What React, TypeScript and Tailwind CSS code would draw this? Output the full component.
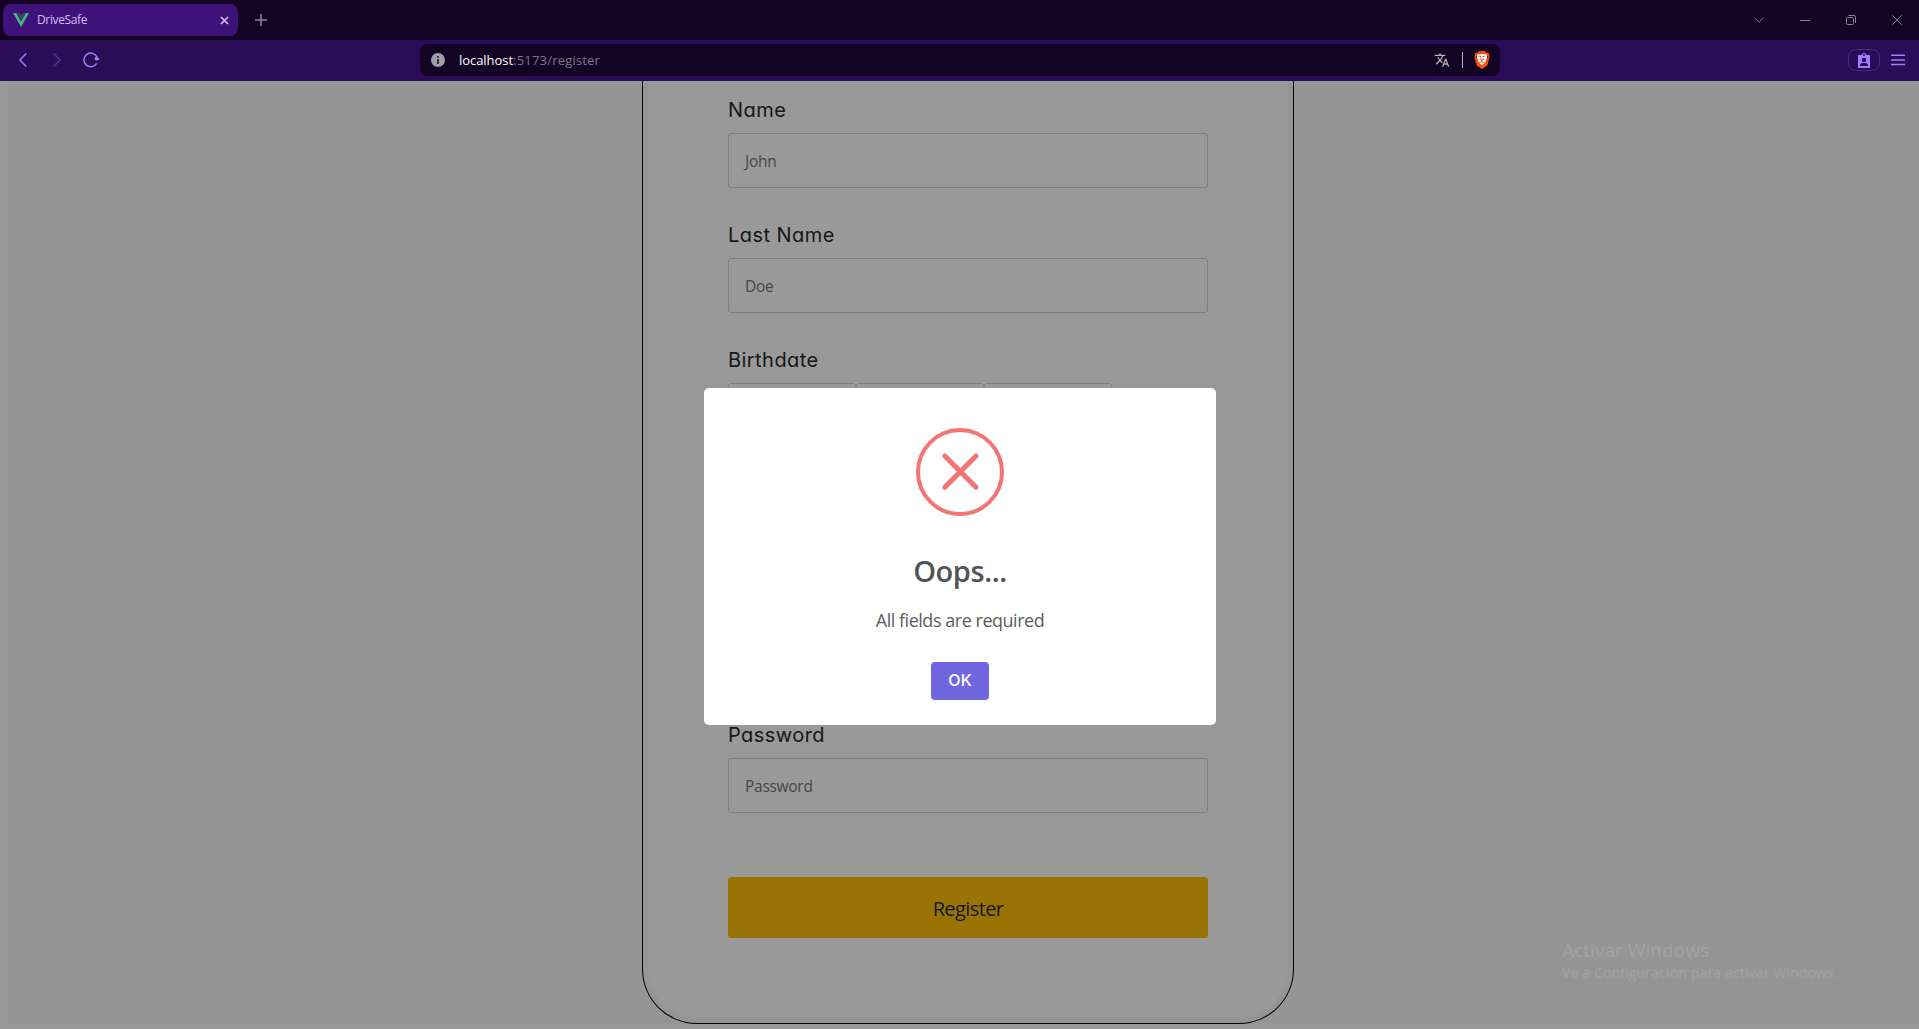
import type { ReactNode } from "react";
import { SiBrave } from "react-icons/si";
import { MdTranslate, MdAssignmentInd } from "react-icons/md";

function TabStrip() {
  return (
    <div className="flex h-10 items-center bg-[#130324] pl-[3px]">
      <div className="flex h-8 w-[235px] items-center rounded-lg bg-[#3e1279] pr-[9px] pl-[10px] text-[12px] text-[#d2bdf2]">
        <svg width="16" height="14" viewBox="0 0 16 14" className="mr-2 shrink-0">
          <path d="M0 0h3.2L8 8.4 12.8 0H16L8 14z" fill="#42b883" />
          <path d="M3.2 0h3L8 3.1 9.8 0h3L8 8.4z" fill="#35495e" />
        </svg>
        <span className="flex-1 tracking-[-0.36px]">DriveSafe</span>
        <svg width="9" height="9" viewBox="0 0 9 9" stroke="#d2bdf2" strokeWidth="1.7">
          <path d="M1 1l7 7M8 1L1 8" />
        </svg>
      </div>
      <svg width="12" height="12" viewBox="0 0 12 12" stroke="#8d7ba8" strokeWidth="1.6" className="ml-[17px]">
        <path d="M6 0v12M0 6h12" />
      </svg>
      <div className="ml-auto flex items-center text-[#8a8092]">
        <svg width="10" height="6" viewBox="0 0 10 6" fill="none" stroke="currentColor" className="mr-9">
          <path d="M.4.5L5 5.3 9.6.5" />
        </svg>
        <svg width="10" height="10" viewBox="0 0 10 10" stroke="currentColor" className="mr-9">
          <path d="M0 5.5h10" />
        </svg>
        <svg width="10" height="10" viewBox="0 0 10 10" fill="none" stroke="currentColor" className="mr-9">
          <rect x=".5" y="2.5" width="7" height="7" rx="1" />
          <path d="M2.5.5H8A1.5 1.5 0 0 1 9.5 2v6" />
        </svg>
        <svg width="10" height="10" viewBox="0 0 10 10" stroke="currentColor" className="mr-[17px]">
          <path d="M.3.3l9.4 9.4M9.7.3L.3 9.7" />
        </svg>
      </div>
    </div>
  );
}

function Toolbar() {
  return (
    <div className="flex h-[41px] items-center bg-[#2a0d56] pb-px">
      <svg width="8" height="14" viewBox="0 0 8 14" fill="none" stroke="#a47bff" strokeWidth="1.5" className="ml-[19px]">
        <path d="M7.2.6L1 7l6.2 6.4" />
      </svg>
      <svg width="8" height="14" viewBox="0 0 8 14" fill="none" stroke="#56338f" strokeWidth="1.5" className="ml-[26px]">
        <path d="M.8.6L7 7 .8 13.4" />
      </svg>
      <svg width="17" height="16" viewBox="0 0 17 16" fill="none" stroke="#a47bff" strokeWidth="1.5" className="ml-[22px]">
        <path d="M14 5.2A6.8 6.8 0 1 0 13.6 11.4" />
        <circle cx="13.6" cy="6.6" r="1.9" fill="#a47bff" stroke="none" />
        <path d="M13.6 7.2H16.2" />
      </svg>
      <div className="ml-[320px] flex h-8 w-[1080px] items-center rounded-lg bg-[#130324] pr-[10px] pl-[11px] text-[13px]">
        <svg width="14" height="14" viewBox="0 0 14 14" className="mr-[14px]">
          <circle cx="7" cy="7" r="7" fill="#9aa0a6" />
          <path d="M6 3h2v1.8H6zM6 6h2v5H6z" fill="#3a3048" />
        </svg>
        <span className="pt-0.5 tracking-[-0.05px] text-white">localhost</span>
        <span className="flex-1 pt-0.5 tracking-[0.2px] text-[#7d7489]">:5173/register</span>
        <MdTranslate size={16} className="text-[#b9b5b5]" />
        <span className="mr-[11px] ml-3 h-4 w-px bg-[#b9b5b5]" />
        <span className="flex h-[18px] w-4 items-center justify-center bg-[linear-gradient(to_right,transparent_3px,white_3px,white_13px,transparent_13px)] bg-[length:100%_12px] bg-[position:0_3px] bg-no-repeat">
          <SiBrave size={18} className="shrink-0 text-[#fb4b12]" />
        </span>
      </div>
      <div className="ml-auto flex h-[22px] w-8 items-center justify-center rounded-lg border border-[#4a2a80]">
        <svg width="12" height="15" viewBox="0 0 12 15">
          <rect y="2" width="12" height="13" rx="1" fill="#a47bff" />
          <circle cx="6" cy="2.2" r="2.2" fill="#a47bff" />
          <circle cx="6" cy="2" r=".9" fill="#2a0d56" />
          <circle cx="6" cy="7" r="2.2" fill="#2a0d56" />
          <path d="M2 13v-1c0-1.4 2.2-2.2 4-2.2s4 .8 4 2.2v1z" fill="#2a0d56" />
        </svg>
      </div>
      <svg width="14" height="12" viewBox="0 0 14 12" stroke="#a47bff" strokeWidth="1.4" className="mr-[14px] ml-[11px]">
        <path d="M0 1.2h14M0 6h14M0 10.5h14" />
      </svg>
    </div>
  );
}

function Field({ label, children }: { label: string; children: ReactNode }) {
  return (
    <div className="flex h-[125px] flex-col">
      <label className="mb-[11px] h-6 font-['Inter'] text-[20px] leading-6 tracking-[0.45px] text-[#161616] [font-feature-settings:'cv11']">
        {label}
      </label>
      {children}
    </div>
  );
}

function TextBox({ text }: { text: string }) {
  return (
    <div className="flex h-[55px] items-center rounded-[3px] border border-[#7e7e84] px-4 pt-0.5 text-[15.5px] tracking-[-0.28px] text-[#44474b]">
      {text}
    </div>
  );
}

function RegisterCard() {
  return (
    <div className="ml-[634px] h-[943px] w-[652px] rounded-b-[55px] border border-t-0 border-black bg-[#959595] px-[5px] pb-[5px]">
      <div className="h-full rounded-b-[50px] bg-[#999999] px-20 pt-[17px]">
        <Field label="Name">
          <TextBox text="John" />
        </Field>
        <Field label="Last Name">
          <TextBox text="Doe" />
        </Field>
        <Field label="Birthdate">
          <div className="flex">
            <div className="h-[55px] w-32 rounded-[3px] border border-[#7e7e84]" />
            <div className="h-[55px] w-32 rounded-[3px] border border-[#7e7e84]" />
            <div className="h-[55px] w-32 rounded-[3px] border border-[#7e7e84]" />
          </div>
        </Field>
        <div className="h-[250px]" />
        <Field label="Password">
          <TextBox text="Password" />
        </Field>
        <button className="mt-[29px] h-[61px] w-full rounded-[3px] bg-[#997404] pt-[3px] text-[20px] tracking-[-0.6px] text-[#161616]">
          Register
        </button>
      </div>
    </div>
  );
}

function ErrorDialog() {
  return (
    <div className="absolute top-[307px] left-[704px] flex h-[337px] w-[512px] flex-col items-center rounded-[5px] bg-white">
      <svg width="88" height="88" viewBox="0 0 88 88" fill="none" stroke="#f27474" className="mt-10 shrink-0">
        <circle cx="44" cy="44" r="42" strokeWidth="4" />
        <path d="M28.8 28l31.2 31.2M60 28L28.8 59.2" strokeWidth="5" strokeLinecap="round" />
      </svg>
      <h2 className="mt-[35px] text-[29px] leading-10 font-semibold tracking-[-0.4px] text-[#545454]">Oops...</h2>
      <p className="mt-[17px] text-[18px] leading-6 tracking-[-0.47px] text-[#5c5c5c]">All fields are required</p>
      <button className="mt-[30px] h-[38px] w-[58px] rounded bg-[#7066e0] pb-0.5 font-['Inter'] text-[16px] font-medium text-white">
        OK
      </button>
    </div>
  );
}

export default function App() {
  return (
    <div className="flex h-[1029px] w-[1919px] flex-col overflow-hidden font-['Open_Sans',sans-serif]">
      <TabStrip />
      <Toolbar />
      <main className="relative flex-1 bg-[#999999] pb-[5px] pl-2">
        <div className="h-[943px] bg-[#959595]">
          <RegisterCard />
        </div>
        <ErrorDialog />
        <div className="absolute top-[856px] left-[1562px] text-[#a2a2a2]">
          <div className="text-[19px] leading-[26px] tracking-[0.05px]">Activar Windows</div>
          <div className="text-[14px] leading-5 tracking-[0.15px]">Ve a Configuración para activar Windows.</div>
        </div>
      </main>
    </div>
  );
}
